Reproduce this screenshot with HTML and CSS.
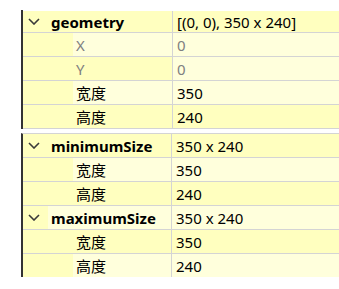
FILE: index.html
```html
<!DOCTYPE html>
<html lang="zh-CN">
<head>
    <meta charset="UTF-8">
    <title>属性浏览器</title>
    <link rel="stylesheet" href="styles.css">
</head>
<body>
    <div class="tree top-tree">
        <div class="row first yellow">
            <div class="name"><span class="branch"><svg width="12" height="7" viewBox="0 0 12 7"><polyline points="1,1 6,6 11,1"/></svg></span><span class="label group">geometry</span></div>
            <div class="value">[(0, 0), 350 x 240]</div>
        </div>
        <div class="row light disabled">
            <div class="name"><span class="indent"></span><span class="label">X</span></div>
            <div class="value">0</div>
        </div>
        <div class="row yellow disabled">
            <div class="name"><span class="indent"></span><span class="label">Y</span></div>
            <div class="value light-cell">0</div>
        </div>
        <div class="row light">
            <div class="name"><span class="indent"></span><span class="label">宽度</span></div>
            <div class="value">350</div>
        </div>
        <div class="row yellow">
            <div class="name"><span class="indent"></span><span class="label">高度</span></div>
            <div class="value">240</div>
        </div>
    </div>

    <div class="tree bottom-tree">
        <div class="row yellow">
            <div class="name"><span class="branch"><svg width="12" height="7" viewBox="0 0 12 7"><polyline points="1,1 6,6 11,1"/></svg></span><span class="label group">minimumSize</span></div>
            <div class="value">350 x 240</div>
        </div>
        <div class="row light">
            <div class="name"><span class="indent"></span><span class="label">宽度</span></div>
            <div class="value">350</div>
        </div>
        <div class="row yellow">
            <div class="name"><span class="indent"></span><span class="label">高度</span></div>
            <div class="value">240</div>
        </div>
        <div class="row light">
            <div class="name"><span class="branch"><svg width="12" height="7" viewBox="0 0 12 7"><polyline points="1,1 6,6 11,1"/></svg></span><span class="label group">maximumSize</span></div>
            <div class="value">350 x 240</div>
        </div>
        <div class="row yellow">
            <div class="name"><span class="indent"></span><span class="label">宽度</span></div>
            <div class="value">350</div>
        </div>
        <div class="row light last">
            <div class="name"><span class="indent"></span><span class="label">高度</span></div>
            <div class="value">240</div>
        </div>
    </div>
</body>
</html>
```

FILE: styles.css
```css
html, body {
    margin: 0;
    padding: 0;
    background: #ffffff;
}
body {
    font-family: "Noto Sans", "Noto Sans CJK SC", sans-serif;
    font-size: 15px;
    color: #000000;
    padding-top: 10px;
}
.tree {
    margin-left: 21px;
    border-left: 2px solid #333333;
}
.bottom-tree {
    margin-top: 4px;
    border-top: 1px solid #d4d4d4;
}
.row {
    display: grid;
    grid-template-columns: 150px 1fr;
    height: 24px;
    box-sizing: border-box;
    border-bottom: 1px solid #d4d4d4;
}
.bottom-tree .row {
    grid-template-columns: 149px 1fr;
}
.row.first {
    height: 23px;
    padding-top: 1px;
}
.row.last {
    height: 23px;
    border-bottom: none;
}
.name {
    display: flex;
    align-items: stretch;
    border-right: 1px solid #d4d4d4;
    background: #ffffbf;
}
.branch {
    width: 25px;
    flex: none;
    display: flex;
    align-items: center;
    padding-left: 5px;
    box-sizing: border-box;
}
.branch svg polyline {
    fill: none;
    stroke: #3a3a3a;
    stroke-width: 1.6;
}
.indent {
    width: 50px;
    flex: none;
}
.label {
    flex: 1;
    display: flex;
    align-items: center;
    padding-left: 3px;
    white-space: nowrap;
    overflow: hidden;
}
.label.group {
    font-weight: bold;
}
.value {
    display: flex;
    align-items: center;
    padding-left: 4px;
    white-space: nowrap;
    overflow: hidden;
}
.yellow .label,
.yellow .value {
    background: #ffffbf;
}
.light .label,
.light .value,
.value.light-cell {
    background: #ffffdc;
}
.disabled .label,
.disabled .value {
    color: #808080;
}
```
